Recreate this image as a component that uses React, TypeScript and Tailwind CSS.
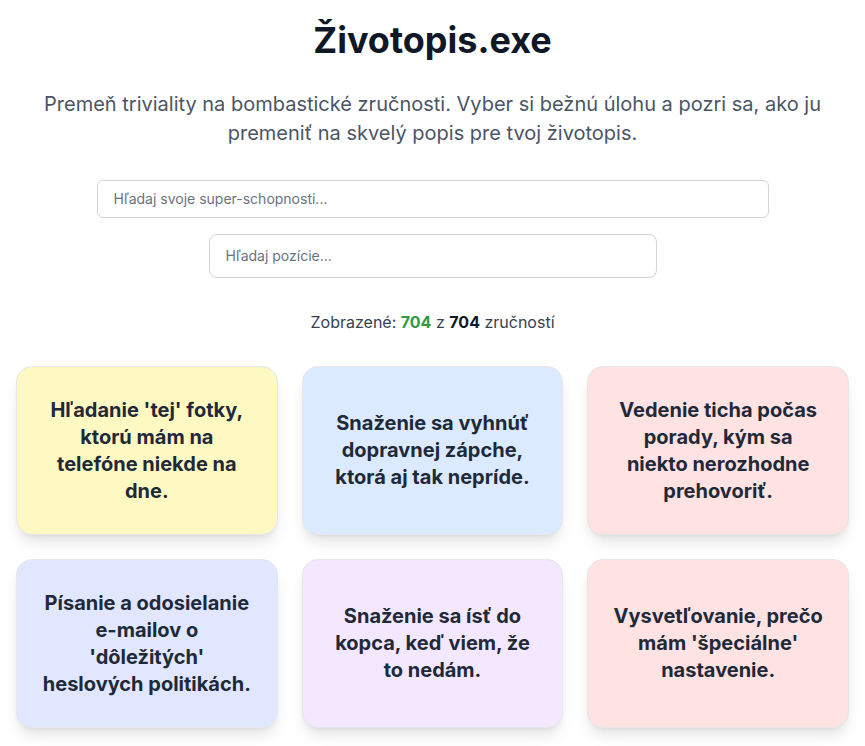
import React from "react";

interface Skill {
  text: string;
  color: string;
}

const skills: Skill[] = [
  { text: "Hľadanie 'tej' fotky, ktorú mám na telefóne niekde na dne.", color: "bg-yellow-100" },
  { text: "Snaženie sa vyhnúť dopravnej zápche, ktorá aj tak nepríde.", color: "bg-blue-100" },
  { text: "Vedenie ticha počas porady, kým sa niekto nerozhodne prehovoriť.", color: "bg-red-100" },
  { text: "Písanie a odosielanie e-mailov o 'dôležitých' heslových politikách.", color: "bg-indigo-100" },
  { text: "Snaženie sa ísť do kopca, keď viem, že to nedám.", color: "bg-purple-100" },
  { text: "Vysvetľovanie, prečo mám 'špeciálne' nastavenie.", color: "bg-red-100" },
];

const App: React.FC = () => {
  return (
    <div className="min-h-screen bg-white font-['Inter',sans-serif] text-gray-800">
      <div className="mx-auto px-4 pt-5 pb-10">
        <h1 className="text-4xl font-bold text-gray-900 text-center mb-[30px]">
          Životopis.exe
        </h1>

        <p className="max-w-[800px] mx-auto text-xl text-gray-600 text-center leading-[29px] mb-8">
          Premeň triviality na bombastické zručnosti. Vyber si bežnú úlohu a pozri sa, ako ju premeniť
          na skvelý popis pre tvoj životopis.
        </p>

        <div className="flex flex-col items-center gap-4">
          <input
            type="text"
            placeholder="Hľadaj svoje super-schopnosti..."
            className="w-full max-w-2xl px-4 py-2 text-sm border border-gray-300 rounded-md placeholder:text-gray-500 outline-none"
          />
          <input
            type="text"
            placeholder="Hľadaj pozície..."
            className="w-full max-w-md px-4 py-[11px] text-sm border border-gray-300 rounded-lg placeholder:text-gray-500 outline-none"
          />
        </div>

        <p className="text-base text-gray-700 text-center mt-8 mb-8">
          Zobrazené: <span className="font-bold text-[#309c42]">704</span> z{" "}
          <span className="font-bold text-gray-900">704</span> zručností
        </p>

        <div className="grid grid-cols-3 gap-6">
          {skills.map((skill, index) => (
            <div
              key={index}
              className={`${skill.color} min-h-[169px] px-6 py-[29px] rounded-2xl border border-gray-200 shadow-lg flex items-center justify-center`}
            >
              <p className="text-xl font-bold text-gray-800 text-center leading-[27px]">
                {skill.text}
              </p>
            </div>
          ))}
        </div>
      </div>
    </div>
  );
};

export default App;
